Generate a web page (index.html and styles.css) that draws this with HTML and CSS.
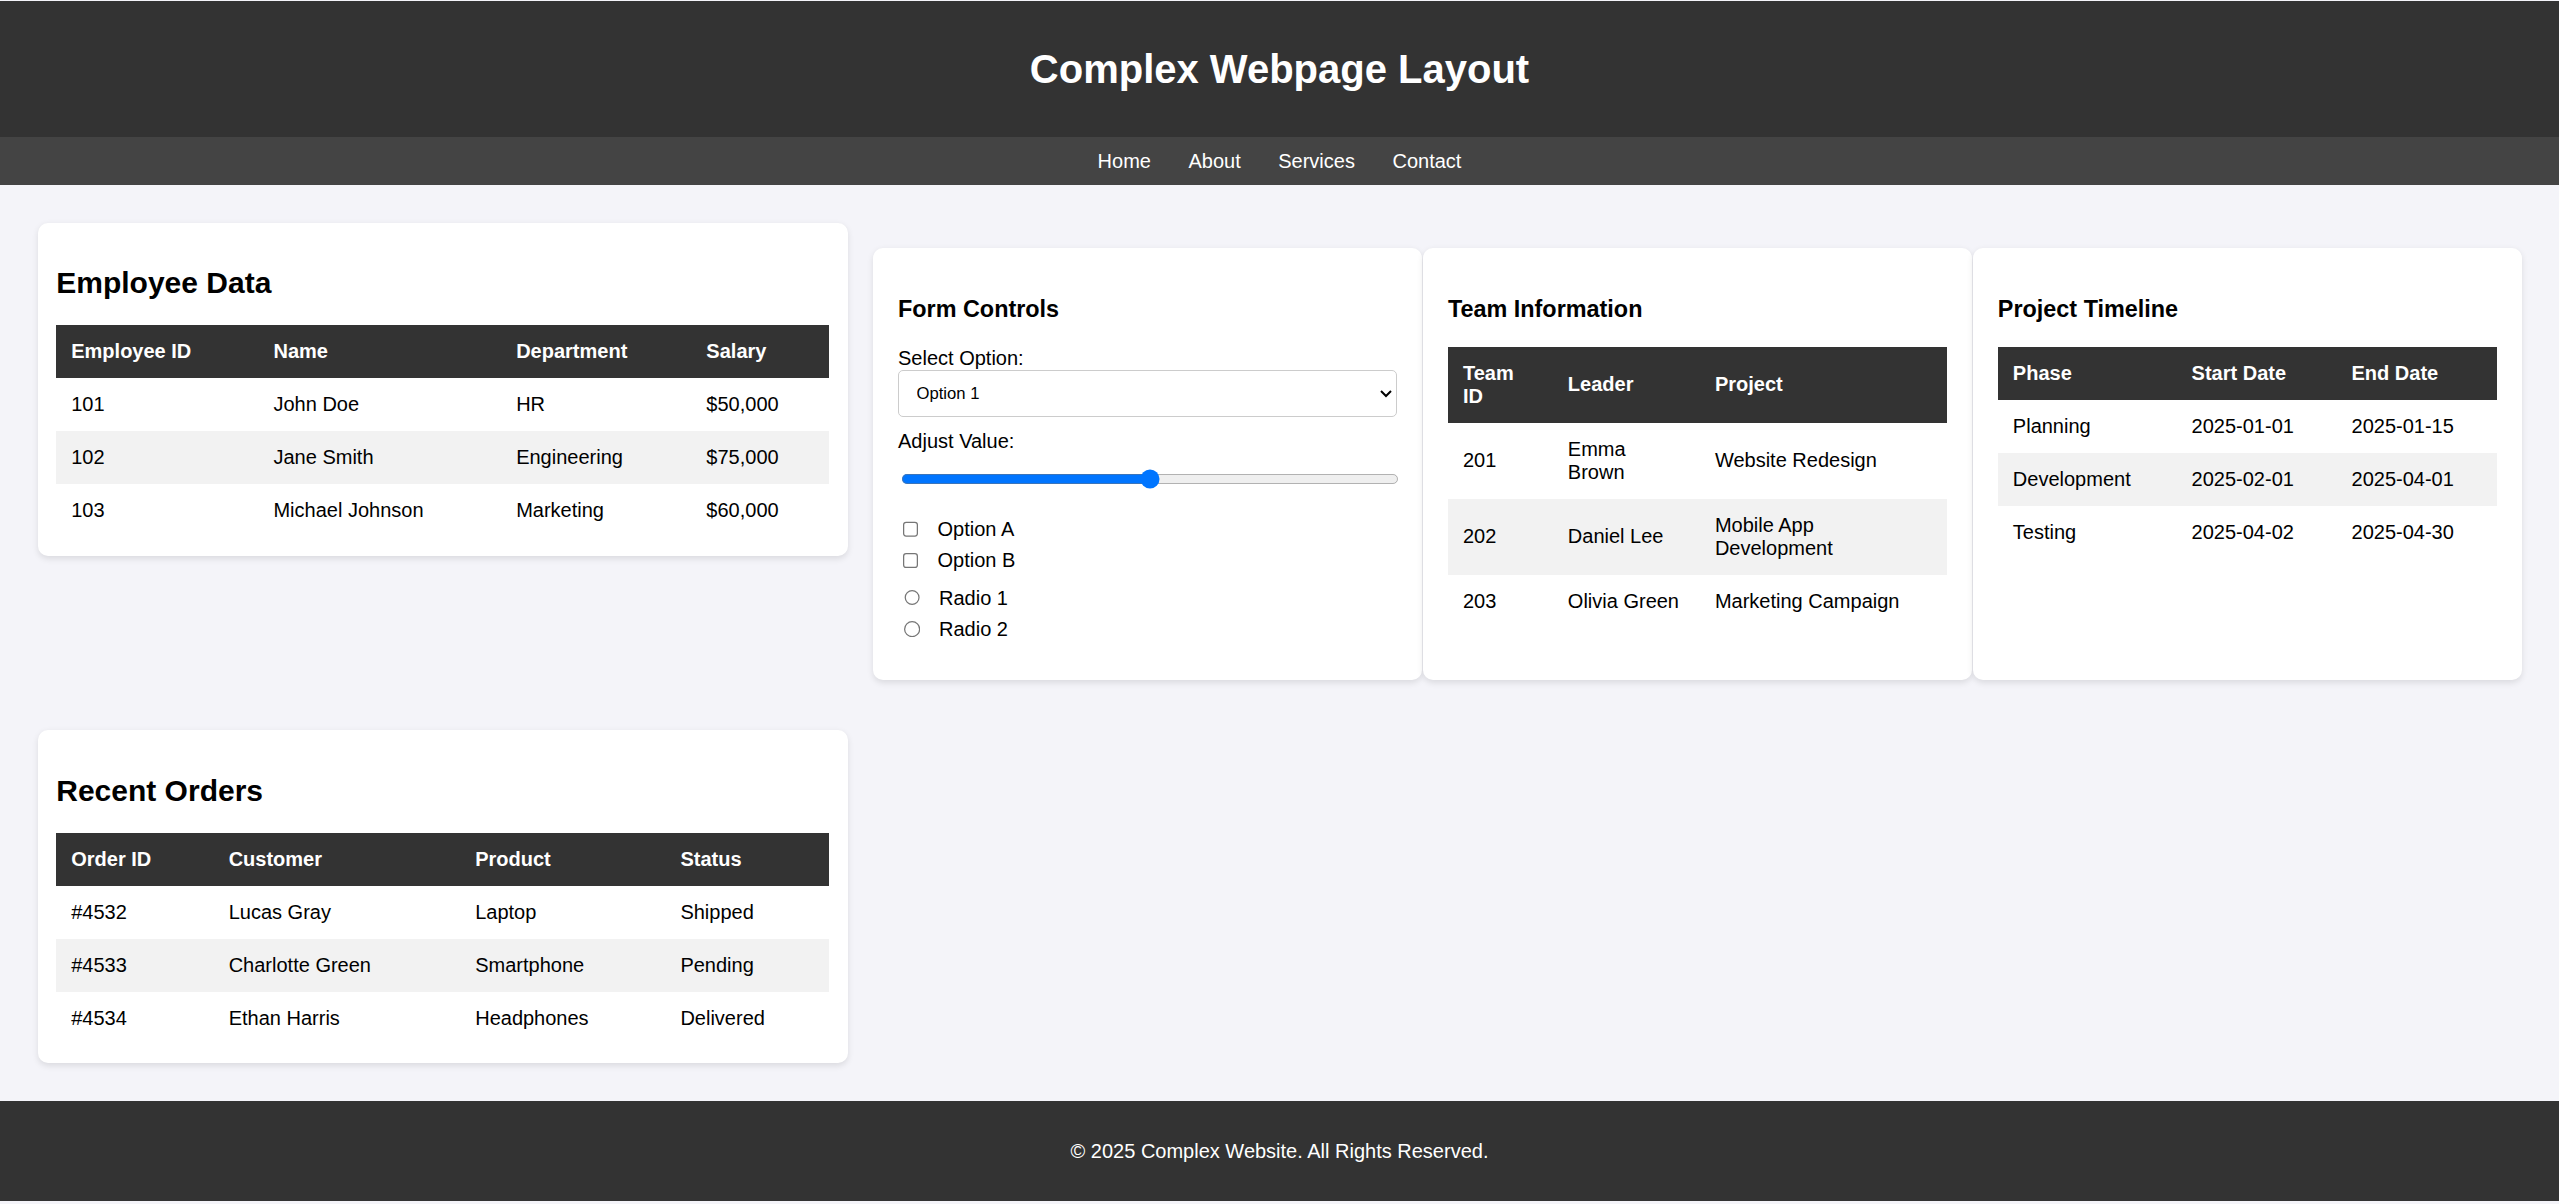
FILE: index.html
```html
<!DOCTYPE html>
<html lang="en">
<head>
<meta charset="utf-8">
<title>Complex Webpage Layout</title>
<link rel="stylesheet" href="styles.css">
</head>
<body>
<header class="site-header">
  <h1 class="site-title">Complex Webpage Layout</h1>
</header>
<nav class="site-nav">
  <a href="#" class="nav-link">Home</a>
  <a href="#" class="nav-link">About</a>
  <a href="#" class="nav-link">Services</a>
  <a href="#" class="nav-link">Contact</a>
</nav>
<main class="main">
  <section class="card card-wide">
    <h2 class="card-title">Employee Data</h2>
    <table class="data-table">
      <thead>
        <tr><th>Employee ID</th><th>Name</th><th>Department</th><th>Salary</th></tr>
      </thead>
      <tbody>
        <tr><td>101</td><td>John Doe</td><td>HR</td><td>$50,000</td></tr>
        <tr><td>102</td><td>Jane Smith</td><td>Engineering</td><td>$75,000</td></tr>
        <tr><td>103</td><td>Michael Johnson</td><td>Marketing</td><td>$60,000</td></tr>
      </tbody>
    </table>
  </section>

  <div class="panel-row">
    <section class="card card-panel">
      <h3 class="panel-title">Form Controls</h3>
      <label class="field-label" for="sel">Select Option:</label>
      <select id="sel" class="select">
        <option>Option 1</option>
        <option>Option 2</option>
        <option>Option 3</option>
      </select>
      <label class="field-label" for="rng">Adjust Value:</label>
      <input id="rng" class="range" type="range" min="0" max="100" value="50">
      <div class="opt-group">
        <label class="opt"><input class="opt-check" type="checkbox">Option A</label>
        <label class="opt"><input class="opt-check" type="checkbox">Option B</label>
      </div>
      <div class="opt-group opt-group-radio">
        <label class="opt"><input class="opt-radio" type="radio" name="r">Radio 1</label>
        <label class="opt"><input class="opt-radio" type="radio" name="r">Radio 2</label>
      </div>
    </section>

    <section class="card card-panel">
      <h3 class="panel-title">Team Information</h3>
      <table class="data-table">
        <thead>
          <tr><th>Team ID</th><th>Leader</th><th>Project</th></tr>
        </thead>
        <tbody>
          <tr><td>201</td><td>Emma Brown</td><td>Website Redesign</td></tr>
          <tr><td>202</td><td>Daniel Lee</td><td>Mobile App Development</td></tr>
          <tr><td>203</td><td>Olivia Green</td><td>Marketing Campaign</td></tr>
        </tbody>
      </table>
    </section>

    <section class="card card-panel">
      <h3 class="panel-title">Project Timeline</h3>
      <table class="data-table">
        <thead>
          <tr><th>Phase</th><th>Start Date</th><th>End Date</th></tr>
        </thead>
        <tbody>
          <tr><td>Planning</td><td>2025-01-01</td><td>2025-01-15</td></tr>
          <tr><td>Development</td><td>2025-02-01</td><td>2025-04-01</td></tr>
          <tr><td>Testing</td><td>2025-04-02</td><td>2025-04-30</td></tr>
        </tbody>
      </table>
    </section>
  </div>

  <section class="card card-wide">
    <h2 class="card-title">Recent Orders</h2>
    <table class="data-table">
      <thead>
        <tr><th>Order ID</th><th>Customer</th><th>Product</th><th>Status</th></tr>
      </thead>
      <tbody>
        <tr><td>#4532</td><td>Lucas Gray</td><td>Laptop</td><td>Shipped</td></tr>
        <tr><td>#4533</td><td>Charlotte Green</td><td>Smartphone</td><td>Pending</td></tr>
        <tr><td>#4534</td><td>Ethan Harris</td><td>Headphones</td><td>Delivered</td></tr>
      </tbody>
    </table>
  </section>
</main>
<footer class="site-footer">
  <p class="footer-text">© 2025 Complex Website. All Rights Reserved.</p>
</footer>
</body>
</html>
```

FILE: styles.css
```css
html {
  zoom: 1.25;
}

body {
  margin: 0;
  padding-top: 1px;
  font-family: "Liberation Sans", Arial, sans-serif;
  font-size: 16px;
  background: #f4f4f9;
  color: #000;
}

.site-header {
  background: #333;
  color: #fff;
  text-align: center;
  padding: 15px;
}

.site-title {
  margin: 0.67em 0;
  font-size: 2em;
  font-weight: bold;
}

.site-nav {
  display: flex;
  justify-content: center;
  background: #444;
  padding: 10px;
  line-height: 18.4px;
}

.nav-link {
  color: #fff;
  text-decoration: none;
  margin: 0 15px;
}

.main {
  display: grid;
  grid-template-columns: 648.4px 1fr;
  column-gap: 20px;
  row-gap: 20px;
  padding: 30px;
  align-items: start;
}

.card {
  background: #fff;
  border-radius: 8px;
  box-shadow: 0 2px 5px rgba(0, 0, 0, 0.1);
}

.card-wide {
  padding: 15px;
}

.card-title {
  font-size: 1.5em;
  margin: 0.83em 0;
}

.panel-row {
  display: flex;
  gap: 1px;
  padding: 20px 0;
}

.card-panel {
  flex: 1 1 0;
  min-width: 0;
  padding: 20px;
}

.panel-title {
  font-size: 1.17em;
  margin: 1em 0;
}

.data-table {
  width: 100%;
  border-collapse: collapse;
}

.data-table th,
.data-table td {
  padding: 12px;
  text-align: left;
}

.data-table th {
  background: #333;
  color: #fff;
  font-weight: bold;
}

.data-table tbody tr:nth-child(even) {
  background: #f2f2f2;
}

.field-label {
  display: block;
}

.select {
  display: block;
  box-sizing: border-box;
  width: 100%;
  height: 38px;
  padding: 0 10px;
  margin: 0 0 10px;
  font-family: "Liberation Sans", Arial, sans-serif;
  font-size: 13.33px;
  color: #000;
  background: #fff;
  border: 1px solid #ccc;
  border-radius: 4px;
}

.range {
  display: block;
  box-sizing: border-box;
  width: 100%;
  height: 16px;
  margin: 13px 2px 20px 2px;
}

.opt-group-radio {
  margin-top: 5px;
  margin-bottom: 8px;
}

.opt {
  display: flex;
  align-items: center;
  height: 25px;
}

.opt-check {
  margin: 0 14.6px 0 4px;
}

.opt-radio {
  margin: 0 14.8px 0 5px;
}

.site-footer {
  background: #333;
  color: #fff;
  text-align: center;
  padding: 15px;
}

.footer-text {
  margin: 16px 0;
}
```
